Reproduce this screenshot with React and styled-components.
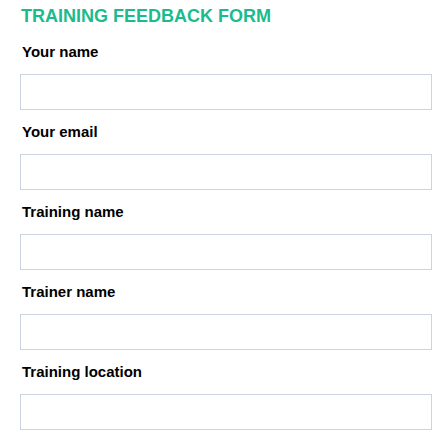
import React from 'react';
import styled, { createGlobalStyle } from 'styled-components';

const GlobalStyle = createGlobalStyle`
  html, body {
    margin: 0;
    background: #ffffff;
  }
  body {
    font-family: "Liberation Sans", Arial, sans-serif;
  }
`;

const Form = styled.form`
  display: flex;
  flex-direction: column;
  padding: 6px 15px 0 20px;
`;

const Title = styled.h1`
  margin: 0 0 16px;
  font-size: 18px;
  font-weight: 700;
  line-height: 21px;
  color: #1abc8c;
  padding-left: 1px;
`;

const Fields = styled.div`
  display: flex;
  flex-direction: column;
  gap: 13px;
`;

const Field = styled.div`
  display: flex;
  flex-direction: column;
`;

const Label = styled.label`
  font-size: 15px;
  font-weight: 700;
  line-height: 17px;
  color: #000;
  margin: 0 0 14px 2px;
`;

const Input = styled.input`
  box-sizing: border-box;
  width: 100%;
  height: 36px;
  margin: 0;
  padding: 0 10px;
  border: 1px solid #cbd5e1;
  border-radius: 0;
  background: #fff;
  font: 15px "Liberation Sans", Arial, sans-serif;
  outline: none;
`;

const fields = [
  { id: 'name', label: 'Your name', type: 'text' },
  { id: 'email', label: 'Your email', type: 'email' },
  { id: 'training', label: 'Training name', type: 'text' },
  { id: 'trainer', label: 'Trainer name', type: 'text' },
  { id: 'location', label: 'Training location', type: 'text' },
];

const App = () => {
  return (
    <>
      <GlobalStyle />
      <Form onSubmit={(e) => e.preventDefault()}>
        <Title>TRAINING FEEDBACK FORM</Title>
        <Fields>
          {fields.map((f) => (
            <Field key={f.id}>
              <Label htmlFor={f.id}>{f.label}</Label>
              <Input id={f.id} type={f.type} />
            </Field>
          ))}
        </Fields>
      </Form>
    </>
  );
};

export default App;
